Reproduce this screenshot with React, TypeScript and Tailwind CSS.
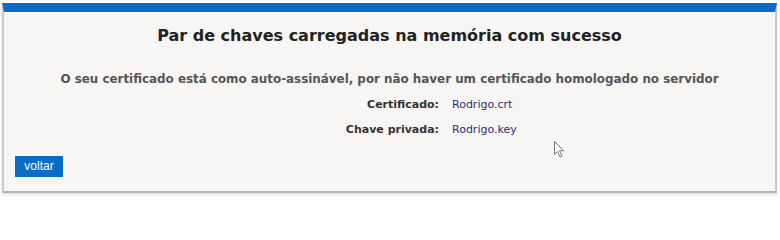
import React from "react";

export default function App() {
  return (
    <div className="w-[780px] h-[203px] bg-white pt-[3px] pl-[2px] relative" style={{ fontFamily: '"DejaVu Sans", Verdana, sans-serif' }}>
      <div className="w-[775px] h-[190px] bg-[#f7f6f4] border-t-[9px] border-t-[#0a6cc4] border-l-2 border-r-2 border-b-2 border-l-[#c9c9c9] border-r-[#c9c9c9] border-b-[#b5b5b5] shadow-[0_2px_3px_rgba(0,0,0,0.12)] flex flex-col">
        <h1 className="text-center text-[16px] font-bold text-[#222] leading-[20px] mt-[14px]">
          Par de chaves carregadas na memória com sucesso
        </h1>
        <p className="text-center text-[11.9px] font-bold text-[#555] leading-[16px] mt-[25px]">
          O seu certificado está como auto-assinável, por não haver um certificado homologado no servidor
        </p>
        <div className="flex flex-col gap-[9px] mt-[10px] text-[11px] leading-[16px]">
          <div className="flex">
            <span className="w-[435px] text-right font-bold text-[#333]">Certificado:</span>
            <span className="ml-[13px] text-[#2c2c86]">Rodrigo.crt</span>
          </div>
          <div className="flex">
            <span className="w-[435px] text-right font-bold text-[#333]">Chave privada:</span>
            <span className="ml-[13px] text-[#2c2c86]">Rodrigo.key</span>
          </div>
        </div>
        <div className="mt-[15px] ml-[11px]">
          <button className="w-[48px] h-[21px] bg-[#0a6cc4] text-white text-[12px] leading-[21px]" style={{ fontFamily: '"Liberation Sans", Arial, sans-serif' }}>
            voltar
          </button>
        </div>
      </div>
      <svg className="absolute left-[554px] top-[141px]" width="11" height="17" viewBox="0 0 11 17">
        <path d="M0.5 0.5 L0.5 13.5 L3.5 10.5 L6 16 L8 15 L5.5 9.8 L9.8 9.8 Z" fill="#fff" stroke="#777" strokeWidth="1" />
      </svg>
    </div>
  );
}
